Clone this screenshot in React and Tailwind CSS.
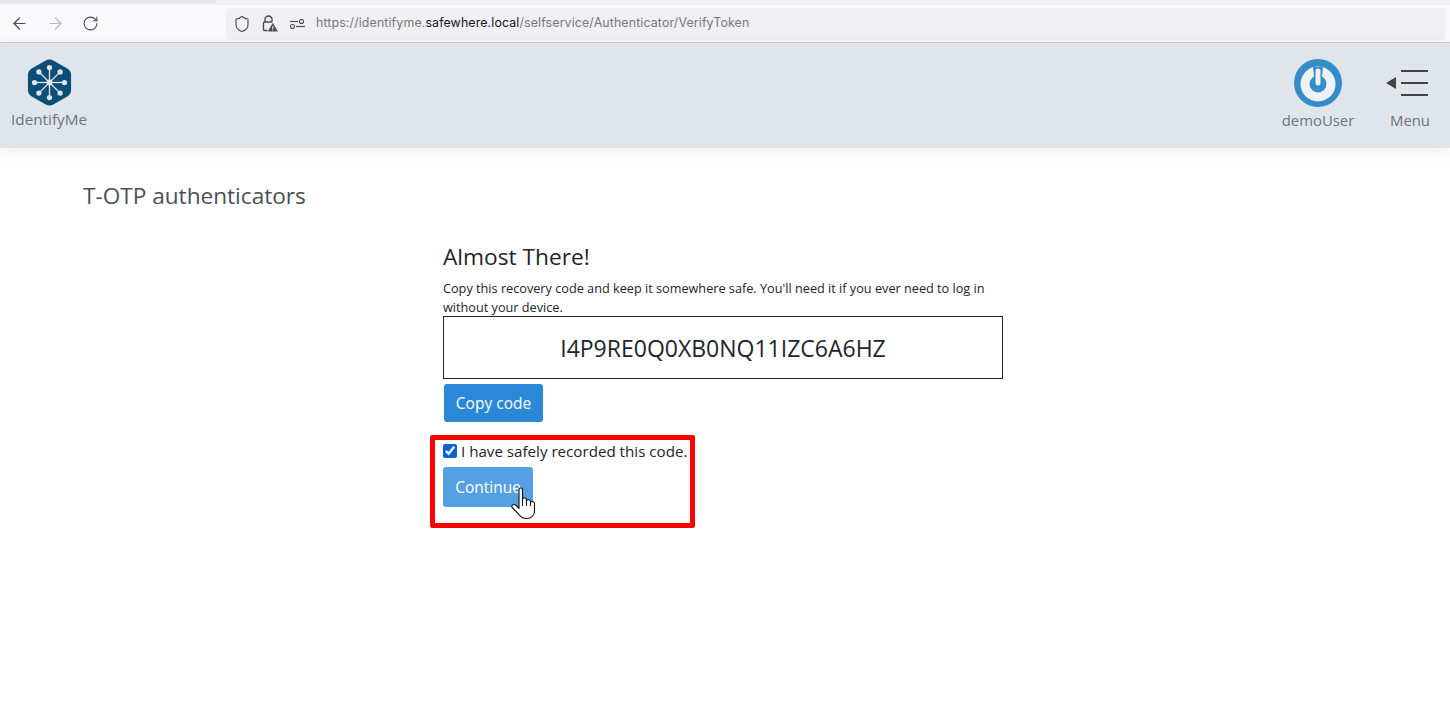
import { ArrowLeft, ArrowRight, RotateCw, Shield } from 'lucide-react';

function LogoMark() {
  const spokes = [[24, 8], [35.3, 12.7], [40, 24], [35.3, 35.3], [24, 40], [12.7, 35.3], [8, 24], [12.7, 12.7]];
  return (
    <svg width="45" height="49" viewBox="0 0 48 52" className="block">
      <path d="M24 1.5 C25.5 1.5 27 2 28 2.6 L43 11 C45.5 12.5 47 15 47 18 L47 34 C47 37 45.5 39.5 43 41 L28 49.4 C25.5 50.8 22.5 50.8 20 49.4 L5 41 C2.5 39.5 1 37 1 34 L1 18 C1 15 2.5 12.5 5 11 L20 2.6 C21 2 22.5 1.5 24 1.5 Z" fill="#0b4f79" />
      <g transform="translate(0 2)">
        {spokes.map(([x, y]) => (
          <g key={`${x}-${y}`}>
            <line x1="24" y1="24" x2={x} y2={y} stroke="#dfe6ee" strokeWidth="1.4" />
            <circle cx={x} cy={y} r="2.8" fill="#dfe6ee" />
          </g>
        ))}
        <circle cx="24" cy="24" r="3.2" fill="#dfe6ee" />
      </g>
    </svg>
  );
}

function PowerIcon() {
  return (
    <svg width="48" height="48" viewBox="0 0 48 48" className="block">
      <circle cx="24" cy="24" r="24" fill="#348dc6" />
      <circle cx="24" cy="25" r="13" fill="none" stroke="#eef1f5" strokeWidth="9" />
      <path d="M19 8 L29 8 L27.5 22 L20.5 22 Z" fill="#348dc6" />
      <line x1="24" y1="12" x2="24" y2="24" stroke="#eef1f5" strokeWidth="5" strokeLinecap="round" />
    </svg>
  );
}

function MenuIcon() {
  return (
    <svg width="44" height="28" viewBox="0 0 44 28" className="block">
      <path d="M0 14 L10 8 L10 20 Z" fill="#444" />
      <rect x="15" y="1" width="27" height="2" fill="#444" />
      <rect x="15" y="13" width="27" height="2" fill="#444" />
      <rect x="15" y="25" width="27" height="2" fill="#444" />
    </svg>
  );
}

function LockWarning() {
  return (
    <svg width="17" height="17" viewBox="0 0 17 17" className="block">
      <path d="M4 7 V4.5 a3.5 3.5 0 0 1 7 0 V7" fill="none" stroke="#4a4a4f" strokeWidth="1.4" />
      <path d="M6.5 15.5 H3.5 a1 1 0 0 1 -1 -1 V8 a1 1 0 0 1 1 -1 H11" fill="none" stroke="#4a4a4f" strokeWidth="1.4" />
      <path d="M11.8 7.8 L16.8 16.5 H6.8 Z" fill="#4a4a4f" />
      <rect x="11.3" y="11" width="1" height="3" fill="#fff" />
      <rect x="11.3" y="14.6" width="1" height="1" fill="#fff" />
    </svg>
  );
}

function PermissionsIcon() {
  return (
    <svg width="15" height="10" viewBox="0 0 15 10" className="block">
      <line x1="0" y1="2.5" x2="8" y2="2.5" stroke="#4a4a4f" strokeWidth="1.2" />
      <circle cx="11.5" cy="2.5" r="2" fill="none" stroke="#4a4a4f" strokeWidth="1.1" />
      <circle cx="2.5" cy="7.5" r="2" fill="none" stroke="#4a4a4f" strokeWidth="1.1" />
      <line x1="6" y1="7.5" x2="15" y2="7.5" stroke="#4a4a4f" strokeWidth="1.2" />
    </svg>
  );
}

function HandCursor() {
  return (
    <svg width="26" height="33" viewBox="0 0 26 33" className="block">
      <path d="M8 2.5 C8 0.5 11.5 0.5 11.5 2.5 L11.5 12 C11.5 10.5 15.5 10.5 15.5 12.5 L15.5 14 C15.5 12.3 19.5 12.3 19.5 14.5 L19.5 15.5 C19.5 14 23.5 14 23.5 16.5 L23.5 24 C23.5 28.5 20.5 31.5 15.5 31.5 C11 31.5 9 29.5 7 26.5 L1.2 20.5 C-0.2 18.5 2.8 16.3 5 18.3 L8 21.5 Z" fill="#fff" stroke="#111" strokeWidth="1.1" strokeLinejoin="round" />
      <path d="M11.5 12 L11.5 19 M15.5 13.5 L15.5 19 M19.5 15 L19.5 19" stroke="#111" strokeWidth="1" fill="none" />
    </svg>
  );
}

export default function App() {
  return (
    <div className="relative min-h-[712px] bg-white font-['Open_Sans','Noto_Sans',sans-serif] overflow-hidden">
      {/* Browser chrome */}
      <div className="h-[43px] bg-[#f9f9fb] border-b border-[#cfcfd8] flex flex-col">
        <div className="h-[5px] bg-[#f0f0f4] shrink-0">
          <div className="w-[216px] h-[3px] bg-[#e6e6ea]" />
        </div>
        <div className="flex-1 flex items-center">
          <div className="flex items-center gap-[17px] pl-[10px] w-[226px] h-full">
            <ArrowLeft size={19} strokeWidth={1.5} className="text-[#4a4a4f]" />
            <ArrowRight size={19} strokeWidth={1.5} className="text-[#b8b8bc]" />
            <RotateCw size={17} strokeWidth={1.5} className="text-[#4a4a4f]" />
          </div>
          <div className="flex-1 h-[32px] mr-[5px] rounded-l-[5px] bg-[#f0f0f4] flex items-center pl-[7px]">
            <Shield size={18} strokeWidth={1.5} className="text-[#4a4a4f]" />
            <div className="ml-[10px]"><LockWarning /></div>
            <div className="ml-[12px]"><PermissionsIcon /></div>
            <span className="ml-[11px] text-[12.4px] tracking-[0.12px] text-[#77777c] font-['Inter','Noto_Sans',sans-serif]">
              https://identifyme.<span className="text-[#15141a]">safewhere.local</span>/selfservice/Authenticator/VerifyToken
            </span>
          </div>
        </div>
      </div>

      {/* App header */}
      <header className="h-[105px] bg-[#e0e5ec] flex justify-between shadow-[0_4px_16px_rgba(0,0,0,0.07)] relative">
        <div className="flex flex-col items-center pl-[11px] pt-[15px]">
          <LogoMark />
          <span className="text-[15.3px] leading-[20px] text-[#6c757d] mt-[2px]">IdentifyMe</span>
        </div>
        <div className="flex pt-[16px]">
          <div className="flex flex-col items-center w-[72px]">
            <PowerIcon />
            <span className="text-[14.9px] leading-[20px] text-[#6c757d] mt-[3px]">demoUser</span>
          </div>
          <div className="flex flex-col items-center ml-[34px] mr-[18px] w-[44px]">
            <div className="pt-[10px] h-[48px] self-start -ml-[2px]"><MenuIcon /></div>
            <span className="text-[14.9px] leading-[20px] text-[#6c757d] mt-[3px]">Menu</span>
          </div>
        </div>
      </header>

      {/* Page */}
      <main className="pl-[83px] pt-[33px]">
        <h1 className="text-[22.6px] leading-[30px] text-[#495057]">T-OTP authenticators</h1>
        <section className="ml-[360px] w-[560px] mt-[31px] text-[#212529]">
          <h2 className="text-[22.7px] leading-[30px]">Almost There!</h2>
          <p className="text-[12.7px] leading-[19px] mt-[7px] -mb-px w-[550px]">
            Copy this recovery code and keep it somewhere safe. You'll need it if you ever need to log in without your device.
          </p>
          <div className="h-[63px] border border-[#212529] flex items-center justify-center text-[23px] pt-[2px]">
            I4P9RE0Q0XB0NQ11IZC6A6HZ
          </div>
          <button className="mt-[5px] ml-[1px] block h-[38px] w-[99px] rounded-[3px] bg-[#2b88d8] text-white text-[15.5px] pt-[2px]">Copy code</button>
          <label className="flex items-center mt-[17px] h-[24px] text-[15.15px]">
            <input type="checkbox" defaultChecked className="w-[14px] h-[14px] accent-[#0d62d8]" />
            <span className="ml-[4px]">I have safely recorded this code.</span>
          </label>
          <button className="mt-[4px] block h-[40px] w-[90px] rounded-[3px] bg-[#55a0e2] text-white text-[15.5px] pt-[2px]">Continue</button>
        </section>
      </main>

      {/* Annotation over the screenshot */}
      <div className="absolute left-[430px] top-[435px] w-[265px] h-[93px] border-[5px] border-[#ff0000] rounded-[2px] pointer-events-none" />
      <div className="absolute left-[511px] top-[487px]"><HandCursor /></div>
    </div>
  );
}
